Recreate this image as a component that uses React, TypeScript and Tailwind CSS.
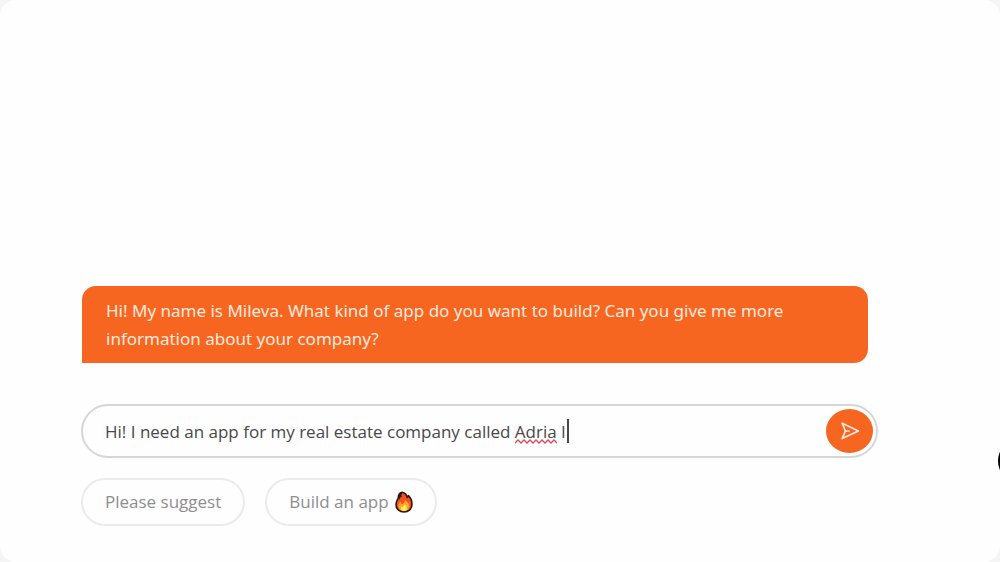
import React, { useState } from 'react';

const FlameIcon: React.FC = () => (
    <svg viewBox="0 0 18 22" className="h-[22px] w-[18px]" aria-hidden="true">
        <path
            d="M7 1.2C9.4 1.6 11.6 3.4 12.2 6.4C13 6 13.3 5.4 13.4 4.6C15.4 6.4 17 9.6 17 13.2C17 18 13.6 21 9 21C4.4 21 1 18 1 13.4C1 10.6 2.2 8.8 3.2 7.2C3.2 4.6 4.6 1.8 7 1.2Z"
            fill="#f4511e"
            stroke="#2b1712"
            strokeWidth="1.6"
            strokeLinejoin="round"
        />
        <path d="M3.4 7.4C3.2 4.4 4.8 1.8 7.4 1.4C6.4 3 6.4 4.6 6.8 5.8C5.6 6 4.4 7.4 4.2 9Z" fill="#2b1712" />
        <path d="M10 9C12.4 11 14.4 12.6 14.4 15.2C14.4 18.4 12 20 9 20C5.8 20 3.4 18.2 3.4 15.2C3.4 13 4.4 12 5 10.6C6 11.4 6.4 12.4 6.6 13.4C8.6 12.6 9.8 11 10 9Z" fill="#ffa726" />
        <path d="M9.4 13.4C11 14.6 12 15.6 12 17.2C12 19 10.8 20 9 20C7.2 20 6 19 6 17.2C6 16.4 6.2 15.8 6.6 15.2C7 15.8 7.4 16 7.8 16C8.6 15.4 9.2 14.4 9.4 13.4Z" fill="#ffee58" />
    </svg>
);

const SendIcon: React.FC = () => (
    <svg viewBox="0 0 20 20" className="h-5 w-5" fill="none" stroke="#ffe9de" strokeWidth="1.7" strokeLinejoin="round" strokeLinecap="round" aria-hidden="true">
        <path d="M2.2 2.2L18.4 10L2.2 17.6L5.4 10Z" />
        <path d="M5.4 10H9" />
    </svg>
);

const Suggestion: React.FC<{ children: React.ReactNode }> = ({ children }) => (
    <button type="button" className="flex h-12 items-center gap-[6px] rounded-full border-2 border-[#ebebeb] px-[22px] text-[#8e8e8e]">
        {children}
    </button>
);

const App: React.FC = () => {
    const [message, setMessage] = useState('Hi! I need an app for my real estate company called Adria I');

    return (
        <div className="min-h-screen bg-[#f5f5f5]">
            <main className="relative flex min-h-screen flex-col justify-end overflow-hidden rounded-2xl bg-[#fefefe] pr-[122px] pb-9 pl-[81px] font-['Open_Sans',sans-serif] text-[17px]">
                <p className="mr-[10px] ml-px rounded-t-[14px] rounded-br-[14px] bg-[#f66620] px-6 pt-[11px] pb-[10px] font-['Noto_Sans',sans-serif] leading-7 text-[#ffeadf]">
                    Hi! My name is Mileva. What kind of app do you want to build? Can you give me more information about your company?
                </p>

                <form onSubmit={(e) => e.preventDefault()} className="relative mt-[41px] flex h-[54px] items-center rounded-full border-2 border-[#d6d6d6] pr-[3px] pl-[22px]">
                    <input
                        type="text"
                        aria-label="Message"
                        spellCheck={false}
                        value={message}
                        onChange={(e) => setMessage(e.target.value)}
                        className="h-10 min-w-0 flex-1 bg-transparent text-[#484848] outline-none"
                    />
                    <button type="submit" aria-label="Send" className="flex h-11 w-[47px] items-center justify-center rounded-[50%] bg-[#f66620]">
                        <SendIcon />
                    </button>

                    {/* spelling mark and text cursor */}
                    <svg viewBox="0 0 42 5" className="pointer-events-none absolute top-[33px] left-[432px] h-[5px] w-[42px]" fill="none" stroke="#e0455c" strokeWidth="1.3" aria-hidden="true">
                        <path d="M0 4L3 1L6 4L9 1L12 4L15 1L18 4L21 1L24 4L27 1L30 4L33 1L36 4L39 1L42 4" />
                    </svg>
                    <span className="pointer-events-none absolute top-[13px] left-[484px] h-6 w-0.5 bg-[#484848]" />
                </form>

                <div className="mt-5 flex gap-5">
                    <Suggestion>Please suggest</Suggestion>
                    <Suggestion>
                        Build an app <FlameIcon />
                    </Suggestion>
                </div>

                <span className="absolute top-[439px] -right-[42px] h-11 w-11 rounded-full bg-black" />
            </main>
        </div>
    );
};

export default App;
